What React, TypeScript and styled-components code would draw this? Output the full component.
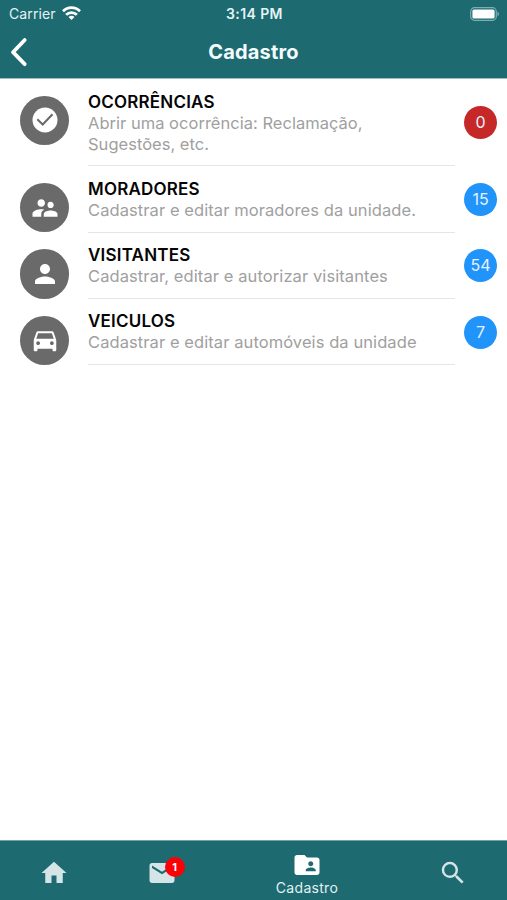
import React from "react";
import styled, { createGlobalStyle } from "styled-components";
import {
  MdSupervisorAccount,
  MdPerson,
  MdDirectionsCar,
  MdHome,
  MdEmail,
  MdFolderShared,
  MdSearch,
} from "react-icons/md";

const teal = "#1d6a71";

const GlobalStyle = createGlobalStyle`
  * { box-sizing: border-box; }
  body { margin: 0; background: #fff; font-family: Inter, "Liberation Sans", sans-serif; }
  svg { display: block; }
`;

const Screen = styled.div`
  width: 507px;
  height: 900px;
  display: flex;
  flex-direction: column;
  background: #fff;
  overflow: hidden;
`;

const Header = styled.header`
  flex: none;
  height: 79px;
  background: ${teal};
  color: #fff;
  border-bottom: 1px solid #a0c0c3;
`;

const StatusBar = styled.div`
  height: 26px;
  display: grid;
  grid-template-columns: 1fr auto 1fr;
  align-items: center;
  padding: 1px 7px 0 9px;
  color: #e4f3f4;
`;

const Carrier = styled.div`
  display: flex;
  align-items: center;
  gap: 6px;
  font-size: 14px;
  line-height: 16px;
  letter-spacing: 0.1px;

  svg {
    margin-top: -2px;
  }
`;

const Clock = styled.div`
  font-size: 14px;
  font-weight: 600;
  line-height: 16px;
  letter-spacing: 0.4px;
`;

const BatterySlot = styled.div`
  justify-self: end;
`;

const NavBar = styled.div`
  height: 51px;
  display: grid;
  grid-template-columns: 60px 1fr 60px;
  align-items: center;
`;

const BackButton = styled.button`
  padding: 0 0 0 9px;
  border: 0;
  background: none;
  color: #fff;
`;

const Heading = styled.h1`
  margin: 0;
  text-align: center;
  font-size: 20px;
  font-weight: 700;
  line-height: 26px;
  letter-spacing: 0.15px;
  color: #f4fcfc;
`;

const List = styled.main`
  flex: 1;
`;

const Row = styled.section`
  display: grid;
  grid-template-columns: 68px 367px 52px;
  padding-left: 20px;
`;

const Avatar = styled.div`
  width: 49.4px;
  height: 49.4px;
  margin-top: 16.7px;
  margin-bottom: -1px;
  border-radius: 50%;
  background: #6a6a6a;
  color: #fff;
  display: flex;
  align-items: center;
  justify-content: center;
`;

const RowText = styled.div`
  padding: 12.5px 0 10.8px;
  border-bottom: 1px solid #e6e6e6;
  line-height: 21px;
`;

const Title = styled.h2`
  margin: 0;
  font-size: 17px;
  font-weight: 600;
  line-height: 21px;
  letter-spacing: 0.2px;
  color: #050505;
`;

const Description = styled.p<{ $spacing: number }>`
  margin: 0;
  font-size: 16.5px;
  line-height: 21px;
  letter-spacing: ${(p) => p.$spacing}px;
  color: #a0a0a0;
  white-space: pre-line;
`;

const Count = styled.span<{ $alert?: boolean }>`
  align-self: center;
  width: 33px;
  height: 33px;
  margin-left: 9px;
  border-radius: 50%;
  background: ${(p) => (p.$alert ? "#c62828" : "#2094fa")};
  color: #e5f2ff;
  font-size: 16px;
  line-height: 33px;
  text-align: center;
`;

const TabBar = styled.nav`
  flex: none;
  height: 60px;
  display: grid;
  grid-template-columns: 108px 107px 184px 107px;
  background: ${teal};
  border-top: 1px solid #73a2a6;
  color: #d5e5e7;
`;

const Tab = styled.a<{ $active?: boolean }>`
  display: flex;
  flex-direction: column;
  align-items: center;
  padding-top: ${(p) => (p.$active ? 9 : 17)}px;
  color: ${(p) => (p.$active ? "#fff" : "inherit")};
`;

const TabLabel = styled.span`
  font-size: 14px;
  line-height: 16px;
  letter-spacing: 0.3px;
  color: #e2f2f3;
`;

const TabIcon = styled.span`
  position: relative;
`;

const Unread = styled.span`
  position: absolute;
  left: 18px;
  top: -1px;
  width: 20px;
  height: 20px;
  border-radius: 50%;
  background: #fb0007;
  color: #fff;
  font-size: 11px;
  font-weight: 700;
  line-height: 20px;
  text-align: center;
`;

const CheckCircle = () => (
  <svg width="26" height="26" viewBox="-13 -13 26 26">
    <circle r="12.5" fill="currentColor" />
    <path d="M-7.7-.8l5.4 5.3L7.5-5.8" fill="none" stroke="#6a6a6a" strokeWidth="2" />
  </svg>
);

const Wifi = () => (
  <svg width="19" height="14" viewBox="0 0 19 14" fill="none" stroke="#fff" strokeWidth="2.7">
    <path d="M1 5.2C5.8.3 13.2.3 18 5.2" />
    <path d="M4.1 8.8c3-3 7.8-3 10.8 0" />
    <path d="M9.5 14L6.5 11c1.7-1.6 4.3-1.6 6 0z" fill="#fff" stroke="none" />
  </svg>
);

const Battery = () => (
  <svg width="30" height="14" viewBox="0 0 30 14">
    <rect x="0.7" y="0.7" width="25.6" height="12.6" rx="3.8" fill="none" stroke="#7caeb2" strokeWidth="1.2" />
    <rect x="2.4" y="2.4" width="22.2" height="9.2" rx="1.6" fill="#fff" />
    <path d="M27.5 4.8c1.8.6 1.8 3.8 0 4.4z" fill="#8ab6ba" />
  </svg>
);

const Chevron = () => (
  <svg width="20" height="30" viewBox="0 0 20 30">
    <path d="M15.7 3L4 15.2l11.7 12" fill="none" stroke="currentColor" strokeWidth="3.8" strokeLinecap="round" strokeLinejoin="round" />
  </svg>
);

const items = [
  { title: "OCORRÊNCIAS", text: "Abrir uma ocorrência: Reclamação,\nSugestões, etc.", count: 0, icon: <CheckCircle />, spacing: 0.02, alert: true },
  { title: "MORADORES", text: "Cadastrar e editar moradores da unidade.", count: 15, icon: <MdSupervisorAccount size={30} />, spacing: 0.08 },
  { title: "VISITANTES", text: "Cadastrar, editar e autorizar visitantes", count: 54, icon: <MdPerson size={30} />, spacing: 0.09 },
  { title: "VEICULOS", text: "Cadastrar e editar automóveis da unidade", count: 7, icon: <MdDirectionsCar size={30} />, spacing: 0.08 },
];

export default function App() {
  return (
    <>
      <GlobalStyle />
      <Screen>
        <Header>
          <StatusBar>
            <Carrier>
              Carrier
              <Wifi />
            </Carrier>
            <Clock>3:14 PM</Clock>
            <BatterySlot>
              <Battery />
            </BatterySlot>
          </StatusBar>
          <NavBar>
            <BackButton aria-label="Voltar">
              <Chevron />
            </BackButton>
            <Heading>Cadastro</Heading>
          </NavBar>
        </Header>
        <List>
          {items.map((item) => (
            <Row key={item.title}>
              <Avatar>{item.icon}</Avatar>
              <RowText>
                <Title>{item.title}</Title>
                <Description $spacing={item.spacing}>{item.text}</Description>
              </RowText>
              <Count $alert={item.alert}>{item.count}</Count>
            </Row>
          ))}
        </List>
        <TabBar>
          <Tab>
            <MdHome size={30} />
          </Tab>
          <Tab>
            <TabIcon>
              <MdEmail size={30} />
              <Unread>1</Unread>
            </TabIcon>
          </Tab>
          <Tab $active>
            <MdFolderShared size={30} />
            <TabLabel>Cadastro</TabLabel>
          </Tab>
          <Tab>
            <MdSearch size={30} />
          </Tab>
        </TabBar>
      </Screen>
    </>
  );
}
